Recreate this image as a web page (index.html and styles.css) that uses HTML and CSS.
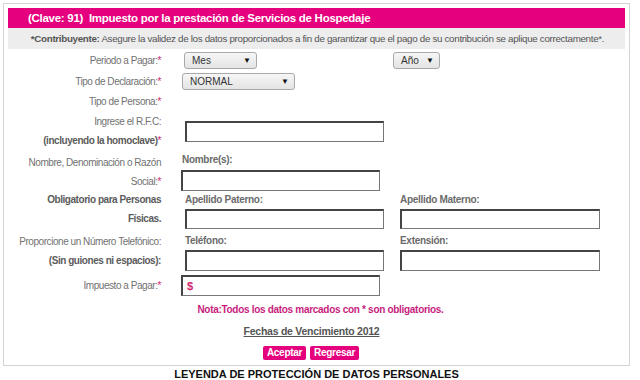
FILE: index.html
```html
<!DOCTYPE html>
<html lang="es">
<head>
<meta charset="utf-8">
<link rel="stylesheet" href="styles.css">
</head>
<body>
<div class="box">
  <div class="title">(Clave: 91)&nbsp; Impuesto por la prestación de Servicios de Hospedaje</div>
  <div class="info"><b>*Contribuyente:</b> Asegure la validez de los datos proporcionados a fin de garantizar que el pago de su contribución se aplique correctamente*.</div>

  <div class="row r-periodo">
    <div class="lbl">Periodo a Pagar:<span class="req">*</span></div>
    <div class="c2"><div class="sel sel-mes"><span>Mes</span><span class="arr">▼</span></div></div>
    <div class="c3"><div class="sel sel-anio"><span>Año</span><span class="arr">▼</span></div></div>
  </div>

  <div class="row r-tipo">
    <div class="lbl">Tipo de Declaración:<span class="req">*</span></div>
    <div class="c2"><div class="sel sel-normal"><span>NORMAL</span><span class="arr">▼</span></div></div>
    <div class="c3"></div>
  </div>

  <div class="row r-persona">
    <div class="lbl">Tipo de Persona:<span class="req">*</span></div>
    <div class="c2"></div>
    <div class="c3"></div>
  </div>

  <div class="row r-rfc">
    <div class="lbl">Ingrese el R.F.C:<br><b>(incluyendo la homoclave)</b><span class="req">*</span></div>
    <div class="c2"><div class="inp inp-rfc"></div></div>
    <div class="c3"></div>
  </div>

  <div class="row r-nombre">
    <div class="lbl">Nombre, Denominación o Razón<br>Social:<span class="req">*</span></div>
    <div class="c2"><div class="flbl flbl-nombre">Nombre(s):</div><div class="inp inp-nombre"></div></div>
    <div class="c3"></div>
  </div>

  <div class="row r-apellido">
    <div class="lbl"><b>Obligatorio para Personas<br>Físicas.</b></div>
    <div class="c2"><div class="flbl">Apellido Paterno:</div><div class="inp inp-a"></div></div>
    <div class="c3"><div class="flbl">Apellido Materno:</div><div class="inp inp-b"></div></div>
  </div>

  <div class="row r-tel">
    <div class="lbl">Proporcione un Número Telefónico:<br><b>(Sin guiones ni espacios):</b></div>
    <div class="c2"><div class="flbl flbl-tel">Teléfono:</div><div class="inp inp-a inp-tall"></div></div>
    <div class="c3"><div class="flbl flbl-tel">Extensión:</div><div class="inp inp-b inp-tall"></div></div>
  </div>

  <div class="row r-imp">
    <div class="lbl">Impuesto a Pagar:<span class="req">*</span></div>
    <div class="c2"><div class="inp inp-imp"><span class="dollar">$</span></div></div>
    <div class="c3"></div>
  </div>

  <div class="nota">Nota:Todos los datos marcados con * son obligatorios.</div>
  <div class="fechas"><a href="#">Fechas de Vencimiento 2012</a></div>
  <div class="buttons">
    <button class="btn" type="button">Aceptar</button>
    <button class="btn" type="button">Regresar</button>
  </div>
</div>
<div class="leyenda">LEYENDA DE PROTECCIÓN DE DATOS PERSONALES</div>
</body>
</html>
```
FILE: styles.css
```css
html, body {
  margin: 0;
  padding: 0;
  background: #ffffff;
}
body {
  font-family: "Liberation Sans", Arial, sans-serif;
  padding: 3px 0 0 3px;
}
.box {
  width: 617px;
  border: 1px solid #d4d4d4;
  padding: 4px 4px 5px 4px;
}
.title {
  background: #e5007e;
  color: #ffffff;
  font-weight: bold;
  font-size: 11.5px;
  letter-spacing: -0.28px;
  height: 20px;
  line-height: 20px;
  padding-left: 20px;
  white-space: nowrap;
}
.info {
  background: #ededed;
  color: #555555;
  font-size: 9.8px;
  height: 21px;
  line-height: 21px;
  text-align: center;
  letter-spacing: -0.32px;
  margin-bottom: 1px;
  padding-left: 2px;
  white-space: nowrap;
}
.info b { color: #555; }
.row {
  display: grid;
  grid-template-columns: 173px 219px 1fr;
  font-size: 10px;
  color: #727272;
}
.lbl {
  text-align: right;
  padding-right: 20px;
  line-height: 19px;
  letter-spacing: -0.45px;
  white-space: nowrap;
}
.lbl b { color: #5c5c5c; }
.req { color: #d0246e; }
.r-periodo { height: 21px; }
.r-periodo .lbl { line-height: 21px; }
.r-tipo { height: 21px; }
.r-tipo .lbl { line-height: 21px; }
.r-persona { height: 20px; }
.r-persona .lbl { line-height: 19px; }
.r-rfc { height: 41px; }
.r-nombre { height: 37px; }
.r-apellido { height: 42px; }
.r-tel { height: 43px; }
.r-imp { height: 21px; }
.r-imp .lbl { line-height: 21px; }

.sel {
  display: flex;
  align-items: center;
  justify-content: space-between;
  box-sizing: border-box;
  height: 17px;
  margin-top: 2px;
  border: 1px solid #a9a9a9;
  border-radius: 3px;
  background: linear-gradient(#f6f6f6, #e4e4e4);
  padding: 0 5px 0 7px;
  font-size: 10px;
  color: #333;
}
.arr { font-size: 8px; color: #111; }
.sel-mes { width: 73px; margin-left: 3px; }
.sel-normal { width: 113px; margin-left: 1px; }
.sel-anio { width: 47px; margin-left: -7px; }

.inp {
  box-sizing: border-box;
  height: 21px;
  width: 199px;
  border: 1px solid #777;
  border-top: 2px solid #444;
  border-left: 2px solid #444;
  background: #fff;
}
.inp-rfc { margin-top: 9px; margin-left: 4px; }
.inp-nombre { margin-left: 0; }
.inp-a { margin-left: 4px; height: 20px; }
.inp-b { width: 200px; height: 20px; }
.inp-tall { height: 21px; }
.inp-imp { margin-left: 0; display: flex; align-items: center; padding-left: 4px; }
.dollar { color: #d0246e; font-weight: bold; font-size: 11px; }

.flbl {
  font-weight: bold;
  color: #6b6b6b;
  line-height: 19px;
  padding-left: 4px;
  letter-spacing: -0.3px;
}
.c3 .flbl { padding-left: 0; }
.flbl-nombre { line-height: 13px; margin-bottom: 4px; padding-left: 1px; }
.flbl-tel { line-height: 18px; }

.nota {
  margin-top: 7px;
  text-align: center;
  color: #c81d7e;
  font-weight: bold;
  font-size: 10px;
  letter-spacing: -0.3px;
  line-height: 14px;
  padding-left: 8px;
}
.fechas {
  text-align: center;
  margin-top: 7px;
  line-height: 14px;
  font-size: 10.5px;
  letter-spacing: -0.25px;
  font-weight: bold;
  padding-right: 10px;
}
.fechas a { color: #555; text-decoration: underline; }
.buttons {
  display: flex;
  justify-content: center;
  gap: 4px;
  margin-top: 8px;
  padding-right: 11px;
}
.btn {
  background: #e5007e;
  color: #fff;
  border: none;
  border-radius: 2px;
  font-family: "Liberation Sans", Arial, sans-serif;
  font-weight: bold;
  font-size: 10px;
  letter-spacing: -0.3px;
  height: 14px;
  line-height: 14px;
  padding: 0 4px;
}
.leyenda {
  width: 627px;
  text-align: center;
  font-weight: bold;
  font-size: 11px;
  color: #111;
  line-height: 14px;
  padding-top: 1px;
}
```
